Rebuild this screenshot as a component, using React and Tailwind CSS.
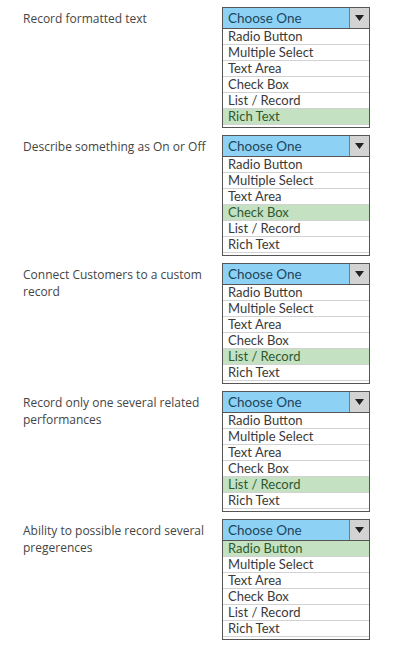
import React from 'react';

const options = ['Radio Button', 'Multiple Select', 'Text Area', 'Check Box', 'List / Record', 'Rich Text'];

const questions = [
  { label: 'Record formatted text', answer: 'Rich Text' },
  { label: 'Describe something as On or Off', answer: 'Check Box' },
  { label: 'Connect Customers to a custom record', answer: 'List / Record' },
  { label: 'Record only one several related performances', answer: 'List / Record' },
  { label: 'Ability to possible record several pregerences', answer: 'Radio Button' },
];

const Dropdown = ({ answer }) => (
  <div className="w-[148px] border border-[#555] bg-white pb-[2px]" style={{ fontFamily: 'Lato, "Open Sans", sans-serif' }}>
    <div className="flex h-[21px] border-b border-[#555]">
      <div className="flex-1 bg-[#8dd2f4] pl-[5px] text-[13.5px] leading-[21px] text-[#1d4560]">Choose One</div>
      <div className="w-[20px] bg-[#d3d3d3] border-l border-[#7a7a7a] flex items-center justify-center">
        <svg width="9" height="6" viewBox="0 0 9 6"><path d="M0 0h9L4.5 6z" fill="#222" /></svg>
      </div>
    </div>
    {options.map((o) => (
      <div
        key={o}
        className={`h-[16px] border-b border-[#d2d2d2] pl-[5px] text-[13px] leading-[15px] ${o === answer ? 'bg-[#c4e1c2] text-[#2f5a2f]' : 'text-[#3a3a3a]'}`}
      >
        {o}
      </div>
    ))}
  </div>
);

export default function App() {
  return (
    <div className="w-[404px] h-[660px] bg-white pt-[7px] pl-[23px] flex flex-col gap-[7px]" style={{ fontFamily: '"Open Sans", "Liberation Sans", sans-serif' }}>
      {questions.map((q) => (
        <div key={q.label} className="flex">
          <div className="w-[199px] pr-[8px] pt-[3px] text-[12px] leading-[17px] text-[#454545]">{q.label}</div>
          <Dropdown answer={q.answer} />
        </div>
      ))}
    </div>
  );
}
